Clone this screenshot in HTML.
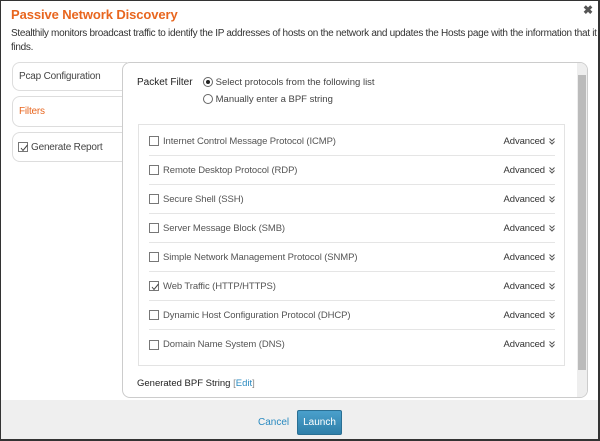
<!DOCTYPE html>
<html><head><style>
*{box-sizing:border-box;margin:0;padding:0}
body{width:600px;height:441px;overflow:hidden;font-family:"Liberation Sans",sans-serif;background:#fff;position:relative}
.frame{position:absolute;left:0;top:0;width:600px;height:441px;border:1px solid #333;border-right:2px solid #333;border-bottom:2px solid #333;background:#fff}
h1{position:absolute;left:11px;top:7px;font-size:13px;color:#e8661f;font-weight:bold;letter-spacing:-0.1px}
.desc{position:absolute;left:11px;top:27px;width:586px;font-size:10px;line-height:14px;color:#333;letter-spacing:-0.3px}
.x{position:absolute;left:583px;top:3px;font-size:12px;color:#555;font-weight:bold}
.tab{position:absolute;left:12px;width:115px;border:1px solid #ddd;border-radius:8px 0 0 8px;background:#fff;font-size:10px;color:#444;padding-left:6px;display:flex;align-items:center;letter-spacing:-0.2px}
.panel{position:absolute;left:122px;top:62px;width:466px;height:336px;background:#fff;border:1px solid #ccc;border-radius:8px;overflow:hidden}
.sb{position:absolute;right:0;top:0;width:10px;height:100%;background:#eee}
.sb div{position:absolute;left:1px;top:12px;width:8px;height:295px;background:#bbb}
.cb{display:inline-block;width:10px;height:10px;border:1px solid #777;vertical-align:middle;margin-right:4px;position:relative;background:#fff}
.row{position:absolute;left:10px;width:406px;height:29px;border-bottom:1px solid #e5e5e5;font-size:9.5px;color:#555;display:flex;align-items:center;letter-spacing:-0.1px}
.adv{position:absolute;right:0;color:#333;display:flex;align-items:center}
.adv svg{margin-left:4px}
.footer{position:absolute;left:1px;top:400px;width:597px;height:39px;background:#efefef}
.btn{position:absolute;left:297px;top:410px;width:45px;height:25px;background:linear-gradient(#4aa0cc,#2f7fa9);border:1px solid #2a6f93;color:#fff;font-size:10px;text-align:center;line-height:23px;border-radius:2px}
</style></head><body>
<div class="frame"></div>
<h1>Passive Network Discovery</h1>
<div class="x">✖</div>
<div class="desc">Stealthily monitors broadcast traffic to identify the IP addresses of hosts on the network and updates the Hosts page with the information that it finds.</div>
<div class="tab" style="top:62px;height:29px">Pcap Configuration</div>
<div class="tab" style="top:96px;height:31px;color:#e8661f">Filters</div>
<div class="tab" style="top:132px;height:30px;padding-left:5px"><span class="cb" style="margin-right:3px"><svg width="10" height="10" style="position:absolute;left:0;top:0"><path d="M2 5l2 2.5 4.5-5.5" stroke="#444" fill="none"/></svg></span>Generate Report</div>
<div class="panel">
 <div style="position:absolute;left:14px;top:14px;font-size:10px;color:#222">Packet Filter</div>
 <div style="position:absolute;left:80px;top:14px;font-size:9.5px;color:#444"><span style="display:inline-block;width:10px;height:10px;border:1px solid #666;border-radius:50%;vertical-align:middle;position:relative"><span style="position:absolute;left:2px;top:2px;width:4px;height:4px;border-radius:50%;background:#222"></span></span> Select protocols from the following list</div>
 <div style="position:absolute;left:80px;top:31px;font-size:9.5px;color:#444"><span style="display:inline-block;width:10px;height:10px;border:1px solid #666;border-radius:50%;vertical-align:middle"></span> Manually enter a BPF string</div>
 <div style="position:absolute;left:15px;top:61px;width:427px;height:242px;border:1px solid #e3e3e3;background:#fff">
  <div class="row" style="top:2px"><span class="cb"></span>Internet Control Message Protocol (ICMP)<span class="adv">Advanced<svg width="6" height="7"><path d="M0.5 0.5l2.5 2.5 2.5-2.5M0.5 3.5l2.5 2.5 2.5-2.5" stroke="#555" fill="none"/></svg></span></div>
  <div class="row" style="top:31px"><span class="cb"></span>Remote Desktop Protocol (RDP)<span class="adv">Advanced<svg width="6" height="7"><path d="M0.5 0.5l2.5 2.5 2.5-2.5M0.5 3.5l2.5 2.5 2.5-2.5" stroke="#555" fill="none"/></svg></span></div>
  <div class="row" style="top:60px"><span class="cb"></span>Secure Shell (SSH)<span class="adv">Advanced<svg width="6" height="7"><path d="M0.5 0.5l2.5 2.5 2.5-2.5M0.5 3.5l2.5 2.5 2.5-2.5" stroke="#555" fill="none"/></svg></span></div>
  <div class="row" style="top:89px"><span class="cb"></span>Server Message Block (SMB)<span class="adv">Advanced<svg width="6" height="7"><path d="M0.5 0.5l2.5 2.5 2.5-2.5M0.5 3.5l2.5 2.5 2.5-2.5" stroke="#555" fill="none"/></svg></span></div>
  <div class="row" style="top:118px"><span class="cb"></span>Simple Network Management Protocol (SNMP)<span class="adv">Advanced<svg width="6" height="7"><path d="M0.5 0.5l2.5 2.5 2.5-2.5M0.5 3.5l2.5 2.5 2.5-2.5" stroke="#555" fill="none"/></svg></span></div>
  <div class="row" style="top:147px"><span class="cb"><svg width="10" height="10" style="position:absolute;left:0;top:0"><path d="M2 5l2 2.5 4.5-5.5" stroke="#444" fill="none"/></svg></span>Web Traffic (HTTP/HTTPS)<span class="adv">Advanced<svg width="6" height="7"><path d="M0.5 0.5l2.5 2.5 2.5-2.5M0.5 3.5l2.5 2.5 2.5-2.5" stroke="#555" fill="none"/></svg></span></div>
  <div class="row" style="top:176px"><span class="cb"></span>Dynamic Host Configuration Protocol (DHCP)<span class="adv">Advanced<svg width="6" height="7"><path d="M0.5 0.5l2.5 2.5 2.5-2.5M0.5 3.5l2.5 2.5 2.5-2.5" stroke="#555" fill="none"/></svg></span></div>
  <div class="row" style="top:205px;border:none"><span class="cb"></span>Domain Name System (DNS)<span class="adv">Advanced<svg width="6" height="7"><path d="M0.5 0.5l2.5 2.5 2.5-2.5M0.5 3.5l2.5 2.5 2.5-2.5" stroke="#555" fill="none"/></svg></span></div>
 </div>
 <div style="position:absolute;left:14px;top:315px;font-size:9.5px;color:#222">Generated BPF String <span style="color:#888">[<span style="color:#2a8ac0">Edit</span>]</span></div>
 <div class="sb"><div></div></div>
</div>
<div class="footer"></div>
<div style="position:absolute;left:258px;top:417px;font-size:10px;color:#2a8ac0">Cancel</div>
<div class="btn">Launch</div>
</body></html>
